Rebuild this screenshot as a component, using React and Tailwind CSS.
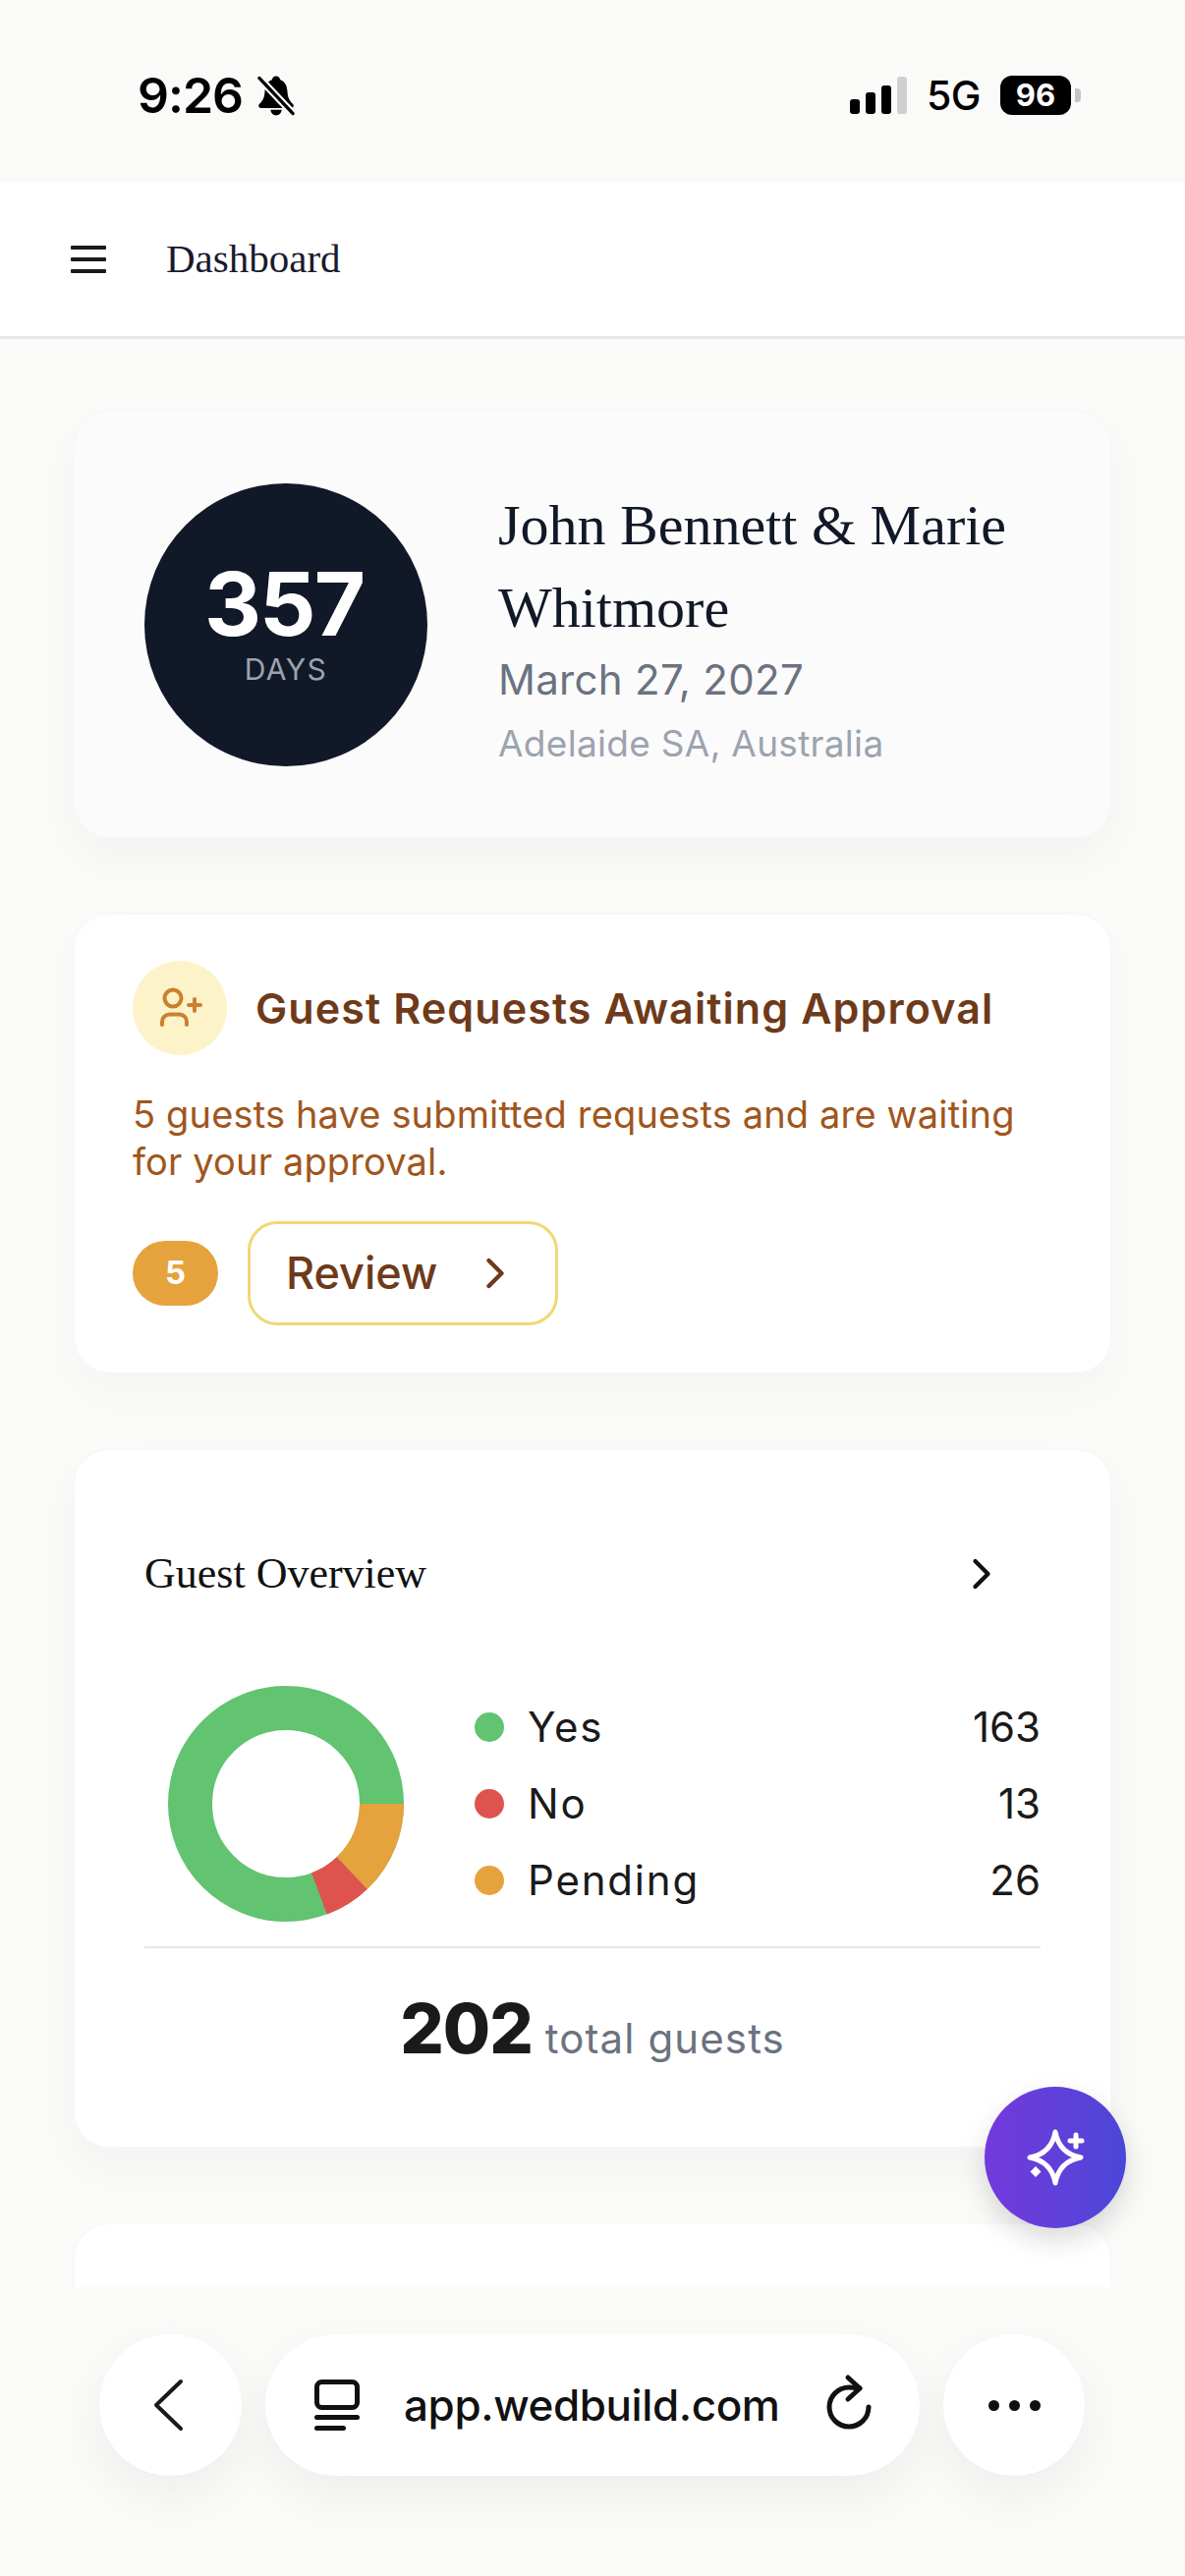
import React from "react";
import { ChevronRight } from "lucide-react";

const serif = "font-['Liberation_Serif',serif]";

function Bell() {
  return (
    <svg width="40" height="43" viewBox="0 0 42 44" className="ml-[14px]">
      <path d="M21 1c3 0 4 2 4.500 4 5 2 7 6 7.500 12 .5 7 2 10 6 14 1.500 2 .5 4-2 4H5c-2.500 0-3.500-2-2-4 4-4 5.500-7 6-14 .5-6 2.500-10 7.500-12C17 3 18 1 21 1z" fill="#000" />
      <path d="M15 37h12c-.5 4-3 6-6 6s-5.500-2-6-6z" fill="#000" />
      <path d="M3 3l36 38" stroke="#fafaf8" strokeWidth="8" />
      <path d="M3 3l36 38" stroke="#000" strokeWidth="3.500" strokeLinecap="round" />
    </svg>
  );
}

function Signal() {
  return (
    <div className="flex items-end gap-[6px] h-[38px]">
      <div className="w-[10px] h-[15px] rounded-[3px] bg-black" />
      <div className="w-[10px] h-[22px] rounded-[3px] bg-black" />
      <div className="w-[10px] h-[29px] rounded-[3px] bg-black" />
      <div className="w-[10px] h-[38px] rounded-[3px] bg-[#cfcfcf]" />
    </div>
  );
}

function StatusBar() {
  return (
    <div className="h-[186px] shrink-0 bg-[#fafaf8] flex items-center justify-between pl-[140px] pr-[106px] pt-[8px] font-['Inter',sans-serif] text-black">
      <div className="flex items-center">
        <span className="text-[50px] leading-[56px] font-semibold tracking-[-1px]">9:26</span>
        <Bell />
      </div>
      <div className="flex items-center">
        <Signal />
        <span className="ml-[20px] text-[41px] leading-[48px] font-medium tracking-[-0.5px]">5G</span>
        <div className="ml-[20px] w-[72px] h-[40px] rounded-[12px] bg-black text-white flex items-center justify-center text-[31px] font-bold">96</div>
        <div className="ml-[4px] w-[6px] h-[14px] rounded-r-[4px] bg-[#c4c4c4]" />
      </div>
    </div>
  );
}

function Header() {
  return (
    <div className="h-[159px] shrink-0 bg-white border-b-[3px] border-[#e5e7eb] flex items-center pl-[72px]">
      <div className="w-[36px] flex flex-col gap-[8px] mt-[-1px]">
        <div className="h-[4px] bg-[#1a1a1a] rounded-[1px]" />
        <div className="h-[4px] bg-[#1a1a1a] rounded-[1px]" />
        <div className="h-[4px] bg-[#1a1a1a] rounded-[1px]" />
      </div>
      <div className={`ml-[61px] mt-[-2px] text-[41px] leading-[50px] text-[#1a1a2e] ${serif}`}>Dashboard</div>
    </div>
  );
}

function CountdownCard() {
  return (
    <div className="h-[435px] shrink-0 rounded-[36px] bg-[#fbfbfb] border border-[#f7f7f5] shadow-[0_20px_45px_rgba(0,0,0,0.03)] flex items-center pl-[71px]">
      <div className="w-[288px] h-[288px] rounded-full bg-[#111827] shrink-0 flex flex-col items-center justify-center">
        <div className="text-[90px] leading-[84px] font-bold text-white tracking-[-2px] mr-[4px]">357</div>
        <div className="text-[30px] leading-[34px] text-[#9ca3af] mt-[7px] tracking-[1.500px]">DAYS</div>
      </div>
      <div className="ml-[72px] flex flex-col">
        <div className={`text-[58px] leading-[84px] text-[#111827] ${serif}`}>John Bennett &amp; Marie<br />Whitmore</div>
        <div className="text-[42px] leading-[52px] text-[#6b7280] mt-[5px] tracking-[0.300px]">March 27, 2027</div>
        <div className="text-[37px] leading-[44px] text-[#9ca3af] mt-[17px] tracking-[0.300px]">Adelaide SA, Australia</div>
      </div>
    </div>
  );
}

function RequestsCard() {
  return (
    <div className="h-[468px] shrink-0 rounded-[36px] bg-white border border-[#f7f7f5] shadow-[0_20px_45px_rgba(0,0,0,0.025)] pl-[59px] pt-[47px]">
      <div className="flex items-center">
        <div className="w-[96px] h-[96px] rounded-full bg-[#fdf3c8] flex items-center justify-center">
          <svg width="48" height="48" viewBox="0 0 48 48" fill="none" stroke="#c9812f" strokeWidth="4" strokeLinecap="round">
            <circle cx="17" cy="14" r="8.500" />
            <path d="M6 41v-3a7.500 7.500 0 0 1 7.500-7.500h10a7.500 7.500 0 0 1 7.500 7.500v3" />
            <path d="M39 15v12M33 21h12" />
          </svg>
        </div>
        <div className="ml-[29px] text-[43px] leading-[56px] font-semibold text-[#6e3a1a] tracking-[1.100px]">Guest Requests Awaiting Approval</div>
      </div>
      <div className="mt-[36px] text-[38px] leading-[48px] text-[#a0561c] tracking-[0.150px]">5 guests have submitted requests and are waiting<br />for your approval.</div>
      <div className="mt-[37px] flex items-center gap-[30px]">
        <div className="w-[87px] h-[66px] rounded-full bg-[#e6a23c] flex items-center justify-center text-white text-[33px] font-bold">5</div>
        <div className="w-[316px] h-[106px] rounded-[30px] border-[3px] border-[#f0d878] flex items-center pl-[36px] text-[#6e3a1a]">
          <span className="text-[45px] leading-[52px] font-medium">Review</span>
          <ChevronRight size={52} strokeWidth={2} className="ml-[33px]" />
        </div>
      </div>
    </div>
  );
}

function Donut() {
  const c = 2 * Math.PI * 97.5;
  const total = 202;
  const seg = (n) => (n / total) * c;
  return (
    <svg width="240" height="240" viewBox="0 0 240 240" className="shrink-0">
      <g fill="none" strokeWidth="45" transform="rotate(0 120 120)">
        <circle cx="120" cy="120" r="97.5" stroke="#62c370" />
        <circle cx="120" cy="120" r="97.5" stroke="#e6a23c" strokeDasharray={`${seg(26)} ${c}`} />
        <circle cx="120" cy="120" r="97.5" stroke="#df534e" strokeDasharray={`${seg(13)} ${c}`} strokeDashoffset={-seg(26)} />
      </g>
    </svg>
  );
}

function Row({ color, label, value }) {
  return (
    <div className="flex items-center h-[78px] text-[42px] leading-[52px] text-[#1a1a1a]">
      <div className="w-[30px] h-[30px] rounded-full" style={{ backgroundColor: color }} />
      <span className="ml-[24px] flex-1 tracking-[1.800px]">{label}</span>
      <span>{value}</span>
    </div>
  );
}

function OverviewCard() {
  return (
    <div className="h-[711px] shrink-0 rounded-[36px] bg-white border border-[#f7f7f5] shadow-[0_20px_45px_rgba(0,0,0,0.03)] px-[71px] pt-[96px]">
      <div className="flex items-center justify-between h-[60px]">
        <div className={`text-[44px] leading-[60px] text-[#111] ${serif}`}>Guest Overview</div>
        <ChevronRight size={52} strokeWidth={2} color="#111" className="mr-[34px]" />
      </div>
      <div className="mt-[84px] flex items-start pl-[24px]">
        <Donut />
        <div className="ml-[72px] flex-1 flex flex-col mt-[3px]">
          <Row color="#62c370" label="Yes" value="163" />
          <Row color="#df534e" label="No" value="13" />
          <Row color="#e6a23c" label="Pending" value="26" />
        </div>
      </div>
      <div className="mt-[25px] h-[2px] bg-[#e5e7eb]" />
      <div className="mt-[40px] flex items-baseline justify-center">
        <span className="text-[70px] leading-[84px] font-extrabold text-[#1a1a1a] tracking-[-1px]">202</span>
        <span className="ml-[13px] text-[42px] leading-[52px] text-[#6b7280] tracking-[1.100px]">total guests</span>
      </div>
    </div>
  );
}

function BottomBar() {
  return (
    <div className="h-[294px] shrink-0 bg-[#fafaf8] pl-[101px] pr-[102px] pt-[48px] flex gap-[24px] items-start relative">
      <div className="w-[145px] h-[144px] rounded-full bg-white shadow-[0_20px_50px_rgba(0,0,0,0.05)] flex items-center justify-center">
        <svg width="32" height="54" viewBox="0 0 32 54" className="mr-[6px]"><path d="M29 3L4 27l25 24" fill="none" stroke="#1a1a1a" strokeWidth="4" strokeLinecap="round" strokeLinejoin="round" /></svg>
      </div>
      <div className="flex-1 h-[144px] rounded-full bg-white shadow-[0_20px_50px_rgba(0,0,0,0.05)] flex items-center pl-[50px]">
        <svg width="46" height="52" viewBox="0 0 46 52" className="shrink-0">
          <rect x="2.500" y="2.500" width="41" height="26" rx="5" fill="none" stroke="#111" strokeWidth="5" />
          <rect x="0" y="36" width="46" height="5" rx="2.500" fill="#111" />
          <rect x="0" y="47" width="32" height="5" rx="2.500" fill="#111" />
        </svg>
        <span className="ml-[45px] text-[44px] leading-[56px] font-medium text-[#111] font-['Inter',sans-serif] tracking-[-0.400px]">app.wedbuild.com</span>
        <svg width="48" height="60" viewBox="0 0 48 60" className="ml-[46px] mt-[-6px] shrink-0" fill="none" stroke="#111" strokeWidth="5" strokeLinecap="round" strokeLinejoin="round">
          <path d="M44 35A20 20 0 1 1 24 15C28 15 31 15.500 35 16" />
          <path d="M23 5l12 11-12 11" />
        </svg>
      </div>
      <div className="w-[144px] h-[144px] rounded-full bg-white shadow-[0_20px_50px_rgba(0,0,0,0.05)] flex items-center justify-center gap-[10px]">
        <div className="w-[11px] h-[11px] rounded-full bg-[#111]" />
        <div className="w-[11px] h-[11px] rounded-full bg-[#111]" />
        <div className="w-[11px] h-[11px] rounded-full bg-[#111]" />
      </div>
    </div>
  );
}

export default function App() {
  return (
    <div className="relative w-[1206px] h-[2622px] overflow-hidden flex flex-col bg-[#fafaf8] font-['Inter',sans-serif]">
      <StatusBar />
      <Header />
      <div className="flex-1 min-h-0 overflow-hidden px-[75px] pt-[73px] flex flex-col gap-[77px]">
        <CountdownCard />
        <RequestsCard />
        <OverviewCard />
        <div className="h-[200px] shrink-0 rounded-[36px] bg-white border border-[#f7f7f5]" />
      </div>
      <BottomBar />
      <div className="absolute left-[1002px] top-[2124px] w-[144px] h-[144px] rounded-full bg-gradient-to-r from-[#7438dc] to-[#4a46d8] shadow-[0_12px_28px_rgba(0,0,0,0.15)] flex items-center justify-center">
        <svg width="72" height="72" viewBox="0 0 72 72">
          <path d="M36 10Q40 32 62 36Q40 40 36 62Q32 40 10 36Q32 32 36 10Z" fill="none" stroke="#fff" strokeWidth="5" strokeLinejoin="round" />
          <path d="M57 13v12M51 19h12" fill="none" stroke="#fff" strokeWidth="5" strokeLinecap="round" />
          <path d="M16 45l5.500 5.500L16 56l-5.500-5.500z" fill="#fff" />
        </svg>
      </div>
    </div>
  );
}
